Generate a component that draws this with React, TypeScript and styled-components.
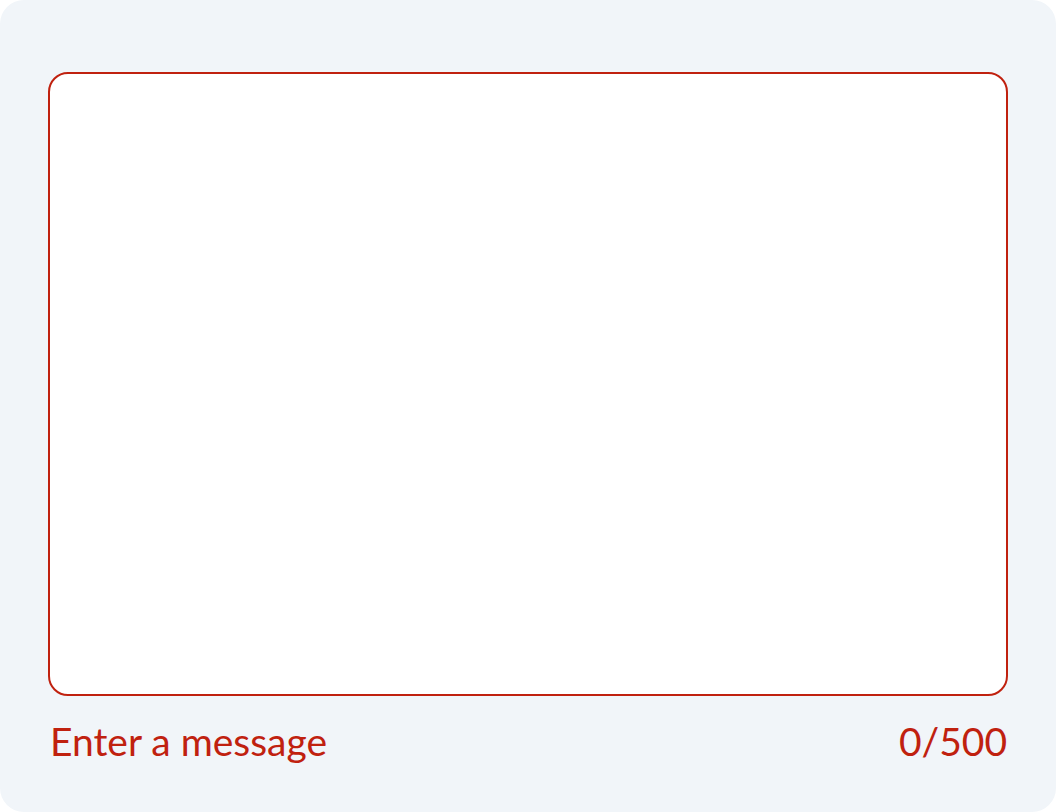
import styled, { createGlobalStyle } from "styled-components"

const GlobalStyle = createGlobalStyle`
    html, body {
        margin: 0;
        padding: 0;
        background: #ffffff;
    }
    * {
        box-sizing: border-box;
    }
`

const Panel = styled.div`
    display: flex;
    flex-flow: column nowrap;
    width: 1056px;
    height: 812px;
    padding: 72px 48px 0;
    background: #f1f5f9;
    border-radius: 24px;
    font-family: Lato, "Open Sans", sans-serif;
`

const MessageBox = styled.textarea`
    display: block;
    width: 100%;
    height: 624px;
    margin: 0;
    padding: 24px;
    resize: none;
    background: #ffffff;
    border: solid 2.5px #c0210f;
    border-radius: 20px;
    outline: none;
    font-family: inherit;
    font-size: 32px;
    color: #1e293b;
`

const Footer = styled.div`
    display: flex;
    flex-flow: row nowrap;
    justify-content: space-between;
    align-items: center;
    padding: 0 1px 0 2px;
    margin-top: 22px;
`

const HelperText = styled.span<{ $align?: string }>`
    color: #c0210f;
    font-size: 39px;
    line-height: 46px;
    text-align: ${p => p.$align || "left"};
`

const App = () => {
    return (
        <>
            <GlobalStyle />
            <Panel>
                <MessageBox aria-invalid="true" />
                <Footer>
                    <HelperText>Enter a message</HelperText>
                    <HelperText $align="right">0/500</HelperText>
                </Footer>
            </Panel>
        </>
    )
}

export default App
